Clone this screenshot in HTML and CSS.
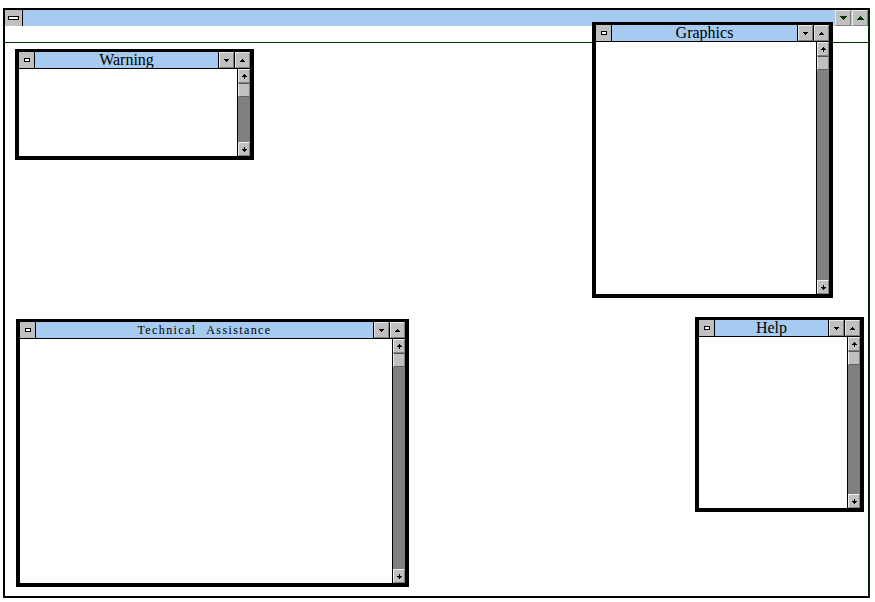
FILE: index.html
```html
<!DOCTYPE html>
<html>
<head>
<meta charset="utf-8">
<link rel="stylesheet" href="styles.css">
</head>
<body>
<div class="frame">
  <div class="mtitle">
    <div class="msys"><span class="bar"></span></div>
    <div class="mcap"></div>
    <div class="mbtn"><svg width="7" height="4" viewBox="0 0 7 4"><path d="M0 0h7v1H0zM1 1h5v1H1zM2 2h3v1H2zM3 3h1v1H3z"/></svg></div>
    <div class="mbtn"><svg width="7" height="4" viewBox="0 0 7 4"><path d="M3 0h1v1H3zM2 1h3v1H2zM1 2h5v1H1zM0 3h7v1H0z"/></svg></div>
  </div>
  <div class="mmenu"></div>
  <div class="mclient"></div>
</div>

<div class="win w-warning">
  <div class="wtitle">
    <div class="wsys"><span class="mini"></span></div>
    <div class="wcap">Warning</div>
    <div class="wbtn"><svg width="5" height="3" viewBox="0 0 5 3"><path d="M0 0h5v1H0zM1 1h3v1H1zM2 2h1v1H2z"/></svg></div>
    <div class="wbtn"><svg width="5" height="3" viewBox="0 0 5 3"><path d="M2 0h1v1H2zM1 1h3v1H1zM0 2h5v1H0z"/></svg></div>
  </div>
  <div class="wbody">
    <div class="wcontent"></div>
    <div class="vscroll">
      <div class="sbtn"><svg width="5" height="5" viewBox="0 0 5 5"><path d="M2 0h1v1H2zM1 1h3v1H1zM0 2h5v1H0zM2 3h1v2H2z"/></svg></div>
      <div class="thumb"></div>
      <div class="track"></div>
      <div class="sbtn"><svg width="5" height="5" viewBox="0 0 5 5"><path d="M2 0h1v2H2zM0 2h5v1H0zM1 3h3v1H1zM2 4h1v1H2z"/></svg></div>
    </div>
  </div>
</div>

<div class="win w-graphics">
  <div class="wtitle">
    <div class="wsys"><span class="mini"></span></div>
    <div class="wcap">Graphics</div>
    <div class="wbtn"><svg width="5" height="3" viewBox="0 0 5 3"><path d="M0 0h5v1H0zM1 1h3v1H1zM2 2h1v1H2z"/></svg></div>
    <div class="wbtn"><svg width="5" height="3" viewBox="0 0 5 3"><path d="M2 0h1v1H2zM1 1h3v1H1zM0 2h5v1H0z"/></svg></div>
  </div>
  <div class="wbody">
    <div class="wcontent"></div>
    <div class="vscroll">
      <div class="sbtn"><svg width="5" height="5" viewBox="0 0 5 5"><path d="M2 0h1v1H2zM1 1h3v1H1zM0 2h5v1H0zM2 3h1v2H2z"/></svg></div>
      <div class="thumb"></div>
      <div class="track"></div>
      <div class="sbtn"><svg width="5" height="5" viewBox="0 0 5 5"><path d="M2 0h1v2H2zM0 2h5v1H0zM1 3h3v1H1zM2 4h1v1H2z"/></svg></div>
    </div>
  </div>
</div>

<div class="win w-tech">
  <div class="wtitle">
    <div class="wsys"><span class="mini"></span></div>
    <div class="wcap small">Technical Assistance</div>
    <div class="wbtn"><svg width="5" height="3" viewBox="0 0 5 3"><path d="M0 0h5v1H0zM1 1h3v1H1zM2 2h1v1H2z"/></svg></div>
    <div class="wbtn"><svg width="5" height="3" viewBox="0 0 5 3"><path d="M2 0h1v1H2zM1 1h3v1H1zM0 2h5v1H0z"/></svg></div>
  </div>
  <div class="wbody">
    <div class="wcontent"></div>
    <div class="vscroll">
      <div class="sbtn"><svg width="5" height="5" viewBox="0 0 5 5"><path d="M2 0h1v1H2zM1 1h3v1H1zM0 2h5v1H0zM2 3h1v2H2z"/></svg></div>
      <div class="thumb"></div>
      <div class="track"></div>
      <div class="sbtn"><svg width="5" height="5" viewBox="0 0 5 5"><path d="M2 0h1v2H2zM0 2h5v1H0zM1 3h3v1H1zM2 4h1v1H2z"/></svg></div>
    </div>
  </div>
</div>

<div class="win w-help">
  <div class="wtitle">
    <div class="wsys"><span class="mini"></span></div>
    <div class="wcap">Help</div>
    <div class="wbtn"><svg width="5" height="3" viewBox="0 0 5 3"><path d="M0 0h5v1H0zM1 1h3v1H1zM2 2h1v1H2z"/></svg></div>
    <div class="wbtn"><svg width="5" height="3" viewBox="0 0 5 3"><path d="M2 0h1v1H2zM1 1h3v1H1zM0 2h5v1H0z"/></svg></div>
  </div>
  <div class="wbody">
    <div class="wcontent"></div>
    <div class="vscroll">
      <div class="sbtn"><svg width="5" height="5" viewBox="0 0 5 5"><path d="M2 0h1v1H2zM1 1h3v1H1zM0 2h5v1H0zM2 3h1v2H2z"/></svg></div>
      <div class="thumb"></div>
      <div class="track"></div>
      <div class="sbtn"><svg width="5" height="5" viewBox="0 0 5 5"><path d="M2 0h1v2H2zM0 2h5v1H0zM1 3h3v1H1zM2 4h1v1H2z"/></svg></div>
    </div>
  </div>
</div>
</body>
</html>
```

FILE: styles.css
```css
* {
  box-sizing: border-box;
  margin: 0;
  padding: 0;
}

html, body {
  width: 875px;
  height: 602px;
  overflow: hidden;
  background: #ffffff;
}

body {
  position: relative;
  padding: 8px 0 0 3px;
  font-family: "Liberation Serif", "Times New Roman", serif;
  color: #000;
}

svg {
  display: block;
  shape-rendering: crispEdges;
}

/* ---------- main frame ---------- */
.frame {
  width: 867px;
  height: 590px;
  border: 2px solid #000;
  border-right-color: #002400;
  display: flex;
  flex-direction: column;
  background: #fff;
}

.mtitle {
  height: 16px;
  display: flex;
  background: #a6caf0;
  flex: none;
}

.msys {
  width: 18px;
  background: #c0c0c0;
  border-right: 1px solid #000;
  display: flex;
  align-items: center;
  justify-content: center;
}

.msys .bar {
  width: 11px;
  height: 4px;
  border: 1px solid #000;
  background: #fff;
}

.mcap {
  flex: 1;
}

.mbtn {
  width: 16px;
  margin-left: 1px;
  background: #c0c0c0;
  border: 1px solid;
  border-color: #e8e8e8 #808080 #808080 #e8e8e8;
  display: flex;
  align-items: center;
  justify-content: center;
}

.mbtn svg {
  fill: #003300;
}

.mmenu {
  height: 17px;
  flex: none;
  border-bottom: 1px solid #003300;
}

.mclient {
  flex: 1;
}

/* ---------- child windows ---------- */
.win {
  position: absolute;
  border: 4px solid #000;
  border-top-width: 3px;
  background: #fff;
  display: flex;
  flex-direction: column;
}

.w-warning  { left: 15px;  top: 49px;  width: 239px; height: 111px; }
.w-graphics { left: 592px; top: 22px;  width: 241px; height: 276px; }
.w-tech     { left: 16px;  top: 319px; width: 393px; height: 268px; }
.w-help     { left: 695px; top: 317px; width: 169px; height: 195px; }

.wtitle {
  height: 16px;
  flex: none;
  display: flex;
  gap: 1px;
  background: #000;
}

.wsys {
  width: 15px;
  background: #c0c0c0;
  display: flex;
  align-items: center;
  justify-content: center;
}

.mini {
  width: 6px;
  height: 4px;
  border: 1px solid #000;
  background: #fff;
}

.wcap {
  flex: 1;
  background: #a6caf0;
  text-align: center;
  font-size: 16px;
  line-height: 16px;
  white-space: nowrap;
  overflow: hidden;
}

.wcap.small {
  font-size: 12px;
  letter-spacing: 1.4px;
  word-spacing: 6px;
}

.wbtn {
  width: 15px;
  background: #c0c0c0;
  border: 1px solid;
  border-color: #e8e8e8 #808080 #808080 #e8e8e8;
  display: flex;
  align-items: center;
  justify-content: center;
}

.wbody {
  flex: 1;
  display: flex;
  border-top: 1px solid #000;
  min-height: 0;
}

.wcontent {
  flex: 1;
  background: #fff;
}

.vscroll {
  width: 13px;
  border-left: 1px solid #000;
  background: #808080;
  display: flex;
  flex-direction: column;
}

.sbtn, .thumb {
  height: 14px;
  flex: none;
  background: #c0c0c0;
  border: 1px solid;
  border-color: #f0f0f0 #808080 #808080 #f0f0f0;
  display: flex;
  align-items: center;
  justify-content: center;
}

.thumb {
  border-color: #555 #808080 #606060 #f0f0f0;
}

.track {
  flex: 1;
}
```
